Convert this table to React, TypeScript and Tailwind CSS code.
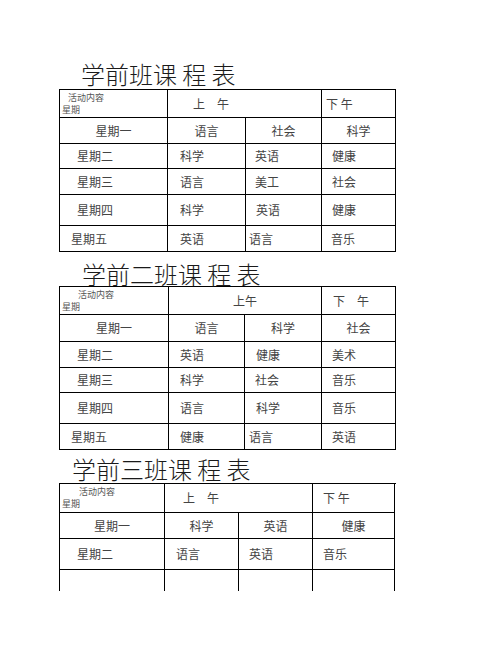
type Cell = { text: string; center?: boolean; pl?: string }

type Sheet = {
  title: string
  titleClass: string
  cols: string
  rows: string[]
  am: string
  amClass: string
  pm: string
  pmClass: string
  subClass: string
  body: Cell[][]
  cut?: boolean
}

const c = (text: string): Cell => ({ text, center: true })

const sheets: Sheet[] = [
  {
    title: '学前班课 程 表',
    titleClass: 'mt-[62px] mb-[3px] pl-[22px]',
    cols: 'grid-cols-[108px_78px_76px_74px]',
    rows: ['h-[28px]', 'h-[26px]', 'h-[25px]', 'h-[26px]', 'h-[31px]', 'h-[26px]'],
    am: '上\u3000午',
    amClass: 'pl-[25px]',
    pm: '下 午',
    pmClass: 'pl-[4px]',
    subClass: 'pl-[8px]',
    body: [
      [c('星期一'), c('语言'), c('社会'), c('科学')],
      [{ text: '星期二', pl: 'pl-[17px]' }, { text: '科学', pl: 'pl-[12px]' }, { text: '英语', pl: 'pl-[9px]' }, { text: '健康', pl: 'pl-[10px]' }],
      [{ text: '星期三', pl: 'pl-[17px]' }, { text: '语言', pl: 'pl-[12px]' }, { text: '美工', pl: 'pl-[9px]' }, { text: '社会', pl: 'pl-[10px]' }],
      [{ text: '星期四', pl: 'pl-[17px]' }, { text: '科学', pl: 'pl-[12px]' }, { text: '英语', pl: 'pl-[10px]' }, { text: '健康', pl: 'pl-[10px]' }],
      [{ text: '星期五', pl: 'pl-[11px]' }, { text: '英语', pl: 'pl-[12px]' }, { text: '语言', pl: 'pl-[3px]' }, { text: '音乐', pl: 'pl-[9px]' }],
    ],
  },
  {
    title: '学前二班课 程 表',
    titleClass: 'mt-[10px] mb-0 pl-[23px]',
    cols: 'grid-cols-[109px_76px_77px_74px]',
    rows: ['h-[28px]', 'h-[27px]', 'h-[26px]', 'h-[25px]', 'h-[31px]', 'h-[26px]'],
    am: '上午',
    amClass: 'justify-center',
    pm: '下\u3000午',
    pmClass: 'pl-[11px]',
    subClass: 'pl-[18px]',
    body: [
      [c('星期一'), c('语言'), c('科学'), c('社会')],
      [{ text: '星期二', pl: 'pl-[17px]' }, { text: '英语', pl: 'pl-[11px]' }, { text: '健康', pl: 'pl-[11px]' }, { text: '美术', pl: 'pl-[10px]' }],
      [{ text: '星期三', pl: 'pl-[17px]' }, { text: '科学', pl: 'pl-[11px]' }, { text: '社会', pl: 'pl-[10px]' }, { text: '音乐', pl: 'pl-[10px]' }],
      [{ text: '星期四', pl: 'pl-[17px]' }, { text: '语言', pl: 'pl-[11px]' }, { text: '科学', pl: 'pl-[11px]' }, { text: '音乐', pl: 'pl-[10px]' }],
      [{ text: '星期五', pl: 'pl-[11px]' }, { text: '健康', pl: 'pl-[11px]' }, { text: '语言', pl: 'pl-[4px]' }, { text: '英语', pl: 'pl-[10px]' }],
    ],
  },
  {
    title: '学前三班课 程 表',
    titleClass: 'mt-[7px] mb-[2px] pl-[13px]',
    cols: 'grid-cols-[105px_74px_74px_82px]',
    rows: ['h-[29px]', 'h-[26px]', 'h-[31px]', 'h-[21px]'],
    am: '上\u3000午',
    amClass: 'pl-[18px]',
    pm: '下 午',
    pmClass: 'pl-[10px]',
    subClass: 'pl-[19px]',
    body: [
      [c('星期一'), c('科学'), c('英语'), c('健康')],
      [{ text: '星期二', pl: 'pl-[17px]' }, { text: '语言', pl: 'pl-[11px]' }, { text: '英语', pl: 'pl-[10px]' }, { text: '音乐', pl: 'pl-[10px]' }],
      [{ text: '' }, { text: '' }, { text: '' }, { text: '' }],
    ],
    cut: true,
  },
]

function Table({ s }: { s: Sheet }) {
  return (
    <div className={`grid ${s.cols} border-l border-t border-black`}>
      {/* header row */}
      <div className={`${s.rows[0]} border-r border-b border-black pt-[2px] text-[9px] leading-[12px] text-[#555]`}>
        <div className={s.subClass}>活动内容</div>
        <div className="pl-[2px]">星期</div>
      </div>
      <div className={`${s.rows[0]} col-span-2 flex items-center border-r border-b border-black ${s.amClass}`}>
        {s.am}
      </div>
      <div className={`${s.rows[0]} flex items-center border-r border-b border-black ${s.pmClass}`}>
        {s.pm}
      </div>

      {s.body.map((row, ri) => {
        const last = s.cut && ri === s.body.length - 1
        return row.map((cell, ci) => (
          <div
            key={`${ri}-${ci}`}
            className={`${s.rows[ri + 1]} flex items-center border-r border-black ${last ? '' : 'border-b'} ${
              cell.center ? 'justify-center' : cell.pl
            }`}
          >
            {cell.text}
          </div>
        ))
      })}
    </div>
  )
}

export default function App() {
  return (
    <div className="flex h-[649px] w-[502px] flex-col overflow-hidden bg-white font-['Noto_Sans_CJK_SC',sans-serif] text-[12px] leading-[16px] text-[#444]">
      <div className="flex w-[396px] flex-col pl-[59px]">
        {sheets.map((s) => (
          <section key={s.title}>
            <h1 className={`${s.titleClass} h-[24px] text-[24px] leading-[24px] font-light whitespace-pre text-[#1a1a1a]`}>
              {s.title}
            </h1>
            <Table s={s} />
          </section>
        ))}
      </div>
    </div>
  )
}
